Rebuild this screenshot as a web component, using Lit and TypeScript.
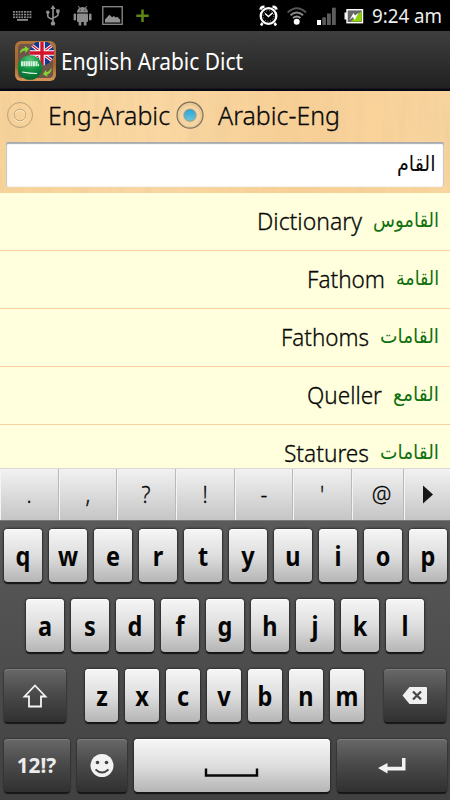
import { LitElement, html, svg, css } from "lit";
import { customElement } from "lit/decorators.js";

// Single-line label squeezed to a fixed width, baseline at `y` of a box `h` high.
const label = (text: string, w: number, h: number, y: number, size: number, cls = "") => html`
  <svg class="label ${cls}" width=${w} height=${h} font-size=${size}>
    <text x="0" y=${y} textLength=${w} lengthAdjust="spacingAndGlyphs">${text}</text>
  </svg>`;

@customElement("status-bar")
class StatusBar extends LitElement {
  static styles = css`
    :host { display: flex; height: 31px; background: #000; box-sizing: border-box; padding-right: 8px; }
    svg { display: block; flex: none; overflow: visible; }
    .time { font-family: "Noto Sans", "Open Sans", sans-serif; fill: #eee; }
    .label { margin-left: auto; }
  `;
  render() {
    return html`
      <svg width="364" height="31">
        <g fill="#8c8c8c">
          ${[0, 1, 2].map((r) => [0, 1, 2, 3, 4, 5, 6].map((c) => svg`<rect x=${13 + c * 2.75} y=${11 + r * 2.7} width="1.9" height="1.7"/>`))}
          <rect x="17" y="19" width="11" height="1.8"/>
        </g>
        <g fill="none" stroke="#929292" stroke-width="1.6">
          <path d="M53 8v15M47.8 13v3q0 2 5 3.3M58 11.5v3q0 2-5 3.3"/>
          <path d="M53 5l2.5 4h-5z" fill="#929292" stroke="none"/>
          <circle cx="53" cy="23.4" r="2.2" fill="#929292" stroke="none"/>
          <circle cx="47.8" cy="12.3" r="1.7" fill="#929292" stroke="none"/>
          <rect x="56.2" y="9.4" width="3.4" height="3.4" fill="#929292" stroke="none"/>
        </g>
        <g fill="#8c8c8c">
          <path d="M77 12.5a5.5 5.5 0 0 1 11 0z"/>
          <path d="M78.4 6l1.6 2.8M86.6 6L85 8.8" stroke="#8c8c8c"/>
          <rect x="77" y="13.6" width="11" height="8.4" rx="1"/>
          <rect x="73.6" y="13.4" width="2.5" height="7" rx="1.2"/><rect x="89" y="13.4" width="2.5" height="7" rx="1.2"/>
          <rect x="78.6" y="20" width="2.7" height="5.6" rx="1.2"/><rect x="83.8" y="20" width="2.7" height="5.6" rx="1.2"/>
          <g fill="#000"><circle cx="80.2" cy="10" r=".6"/><circle cx="84.8" cy="10" r=".6"/></g>
        </g>
        <rect x="102.8" y="6.7" width="19.4" height="17.6" fill="none" stroke="#8c8c8c" stroke-width="1.3"/>
        <path d="M105 22.5v-3l4.3-4.8 2.8 2.6 1.8-1.3 1.8 1.4 1.5-.7 3 3v2.8z" fill="#929292"/>
        <path d="M142.5 9.5v12.4M136.3 15.7h12.4" stroke="#5f8715" stroke-width="2.5"/>

        <g fill="none" stroke="#fff">
          <circle cx="268.5" cy="16" r="7.8" stroke-width="2.3"/>
          <path d="M260.5 9.6q.4-3 4-2.8M276.5 9.6q-.4-3-4-2.8" stroke-width="2.5"/>
          <path d="M262.5 23l-1.5 2.5M274.5 23l1.5 2.5" stroke-width="2.5"/>
          <path d="M265 13.5l3.5 3 4.2-3.7" stroke-width="1.5"/>
          <circle cx="268.5" cy="16" r="5.3" stroke-width=".8" stroke-dasharray=".8 1.97"/>
        </g>
        <g fill="none" stroke-width="1.9">
          <path d="M287.6 12.5q9.3-8.5 18.4 0" stroke="#555"/>
          <path d="M290.5 15.3q6.2-5.6 12.6 0" stroke="#888"/>
          <path d="M293 18q3.8-3 7.5 0" stroke="#999"/>
          <circle cx="296.7" cy="21.7" r="3" fill="#fff" stroke="none"/>
        </g>
        <rect x="317" y="20" width="4" height="5" fill="#fff"/>
        <g fill="#5c5c5c"><rect x="322.3" y="17.3" width="3.6" height="7.7"/><rect x="327" y="13.5" width="3.8" height="11.5"/><rect x="332" y="7.7" width="3.8" height="17.3"/></g>
        <rect x="344.5" y="12.5" width="2.5" height="7" fill="#eee"/>
        <rect x="347" y="9.7" width="15.5" height="13" fill="#666" stroke="#fff" stroke-width="1.4"/>
        <path d="M361.500 11V21.500h-10.500z" fill="#8ed400"/>
        <path d="M349.500 20l4-7 1.500 2.500 4-3-4.500 7.500-1.500-3z" fill="#fff"/>
      </svg>
      <svg class="time label" width="70" height="31" font-size="20">
        <text x="0" y="23" textLength="70" lengthAdjust="spacingAndGlyphs">9:24 am</text>
      </svg>`;
  }
}

@customElement("title-bar")
class TitleBar extends LitElement {
  static styles = css`
    :host { display: flex; height: 60px; box-sizing: border-box; padding-left: 14px; gap: 5px;
      background: linear-gradient(#3e3e3e, #212121 57px, #0a0a14 58px, #05051c); }
    svg { display: block; flex: none; overflow: visible; }
    .label { font-family: "Noto Sans", "Open Sans", sans-serif; fill: #fff; }
  `;
  render() {
    return html`
      <svg width="42" height="60">
        <defs>
          <linearGradient id="frame" x1="0" y1="0" x2="0" y2="1"><stop offset="0" stop-color="#b0763a"/><stop offset=".6" stop-color="#a5642a"/><stop offset="1" stop-color="#d8965a"/></linearGradient>
          <radialGradient id="green" cx=".5" cy=".2" r=".8"><stop offset="0" stop-color="#5cc47c"/><stop offset=".5" stop-color="#139443"/><stop offset="1" stop-color="#04662a"/></radialGradient>
          <clipPath id="ball"><circle cx="28" cy="22" r="12.3"/></clipPath>
          <clipPath id="box"><rect x="2" y="11" width="39" height="38" rx="5"/></clipPath>
        </defs>
        <rect x="1" y="10" width="41" height="40" rx="6" fill="url(#frame)"/>
        <rect x="4" y="13" width="35" height="34" rx="4" fill="#6d5547"/>
        <g clip-path="url(#box)"><g clip-path="url(#ball)">
          <rect x="14" y="8" width="28" height="28" fill="#17398c"/>
          <path d="M15 12l26 20M41 12L15 32" stroke="#fff" stroke-width="3"/>
          <path d="M15 12l26 20M41 12L15 32" stroke="#d3122c" stroke-width="1.2"/>
          <path d="M28 8v28M14 22h28" stroke="#fff" stroke-width="5.6"/>
          <path d="M28 8v28M14 22h28" stroke="#d3122c" stroke-width="3.4"/>
        </g></g>
        <circle cx="16" cy="36.5" r="12.3" fill="url(#green)"/>
        <path d="M7 31.5h17M7 34h18" stroke="#d9f4df" stroke-width="2.4" stroke-dasharray="1.9 .5"/>
        <path d="M8 41q8 1.500 15 1.500" stroke="#e4f4e8" stroke-width="1.1" fill="none"/>
        <path d="M6 22.5q0-5 5-5.5l-.5-2.300 4.500 3-3.500 4.500-.2-2.600q-3 0-5.300 2.900z" fill="#86d432"/>
        <path d="M37.500 36.500q.5 5.500-4.500 7l.7 2.300-4.700-2.500 3-4.600.5 2.600q3-.6 5-4.800z" fill="#86d432"/>
      </svg>
      ${label("English Arabic Dict", 182, 60, 39, 23)}`;
  }
}

@customElement("search-panel")
class SearchPanel extends LitElement {
  static styles = css`
    :host { display: block; position: relative; height: 102px; box-sizing: border-box; overflow: hidden;
      background: linear-gradient(90deg, #f8d39a, #fad7a2 35%, #f8d096 65%, #fad59e); }
    .grain { position: absolute; inset: 0; width: 100%; height: 100%; }
    .content { position: relative; padding: 0 6px; }
    .options { display: flex; height: 51px; }
    svg { display: block; flex: none; overflow: visible; }
    .label { font-family: "Noto Sans", "Open Sans", sans-serif; font-weight: 300; fill: #080808; stroke: #080808; stroke-width: .3px; }
    .first { margin-right: 6px; }
    .dot { margin-right: 14px; }
    .field { display: flex; justify-content: flex-end; height: 45px; box-sizing: border-box; padding-right: 9px; background: #fff;
      border-radius: 2px; box-shadow: inset 0 2px 1px #a9acb0, inset 1px 0 1px #c8c8c8, inset -1px 0 1px #c8c8c8, 0 0 1px #e8d9be; }
    .label.arabic { font-family: "DejaVu Sans", sans-serif; font-weight: 400; stroke: none; }
  `;
  radio(on: boolean) {
    return html`<svg class="dot" width="28" height="51">
      <defs><linearGradient id="blue" x1="0" y1="0" x2="0" y2="1"><stop offset="0" stop-color="#2ba3d8"/><stop offset="1" stop-color="#6cc6dc"/></linearGradient></defs>
      ${on
        ? svg`<circle cx="14" cy="24.2" r="13" fill="#d8bf9180" stroke="#7d705a" stroke-width="1.2"/>
              <circle cx="14" cy="24.8" r="10.5" fill="#f5d5a3"/>
              <circle cx="14" cy="24.2" r="7" fill="#dfc190"/>
              <circle cx="14" cy="24.2" r="5.900" fill="url(#blue)" stroke="#7a9a96" stroke-width=".8"/>`
        : svg`<circle cx="14" cy="24" r="12.5" fill="none" stroke="#bca078" stroke-width="1"/>
              <circle cx="14" cy="25" r="5.8" fill="none" stroke="#ffe7be" stroke-width="1.2"/>
              <circle cx="14" cy="24" r="5.8" fill="none" stroke="#c3a67c" stroke-width="1"/>`}
    </svg>`;
  }
  render() {
    return html`
      <svg class="grain">
        <filter id="wood" x="0" y="0" width="100%" height="100%">
          <feTurbulence type="fractalNoise" baseFrequency="0.09 0.012" numOctaves="3" seed="8"/>
          <feColorMatrix values="0 0 0 0 .78  0 0 0 0 .56  0 0 0 0 .3  .6 0 0 0 -.22"/>
        </filter>
        <rect width="100%" height="100%" filter="url(#wood)"/>
      </svg>
      <div class="content">
        <div class="options">
          ${this.radio(false)}
          ${label("Eng-Arabic", 122, 51, 34, 26, "first")}
          ${this.radio(true)}
          ${label("Arabic-Eng", 122, 51, 34, 26)}
        </div>
        <div class="field">${label("القام", 38.5, 45, 28.5, 21, "arabic")}</div>
      </div>`;
  }
}

const ROWS: [string, number, string, number][] = [
  ["Dictionary", 105, "القاموس", 66],
  ["Fathom", 78, "القامة", 43],
  ["Fathoms", 88, "القامات", 59],
  ["Queller", 75, "القامع", 46],
  ["Statures", 85, "القامات", 59],
];

@customElement("word-list")
class WordList extends LitElement {
  static styles = css`
    :host { display: block; height: 275px; overflow: hidden; background: #ffffdd; }
    .row { display: flex; justify-content: flex-end; gap: 10.5px; height: 58px; box-sizing: border-box; padding-right: 11.5px;
      border-bottom: 1.5px solid #fad09c; }
    svg { display: block; flex: none; overflow: visible; }
    .label { font-family: "Noto Sans", "Open Sans", sans-serif; font-weight: 300; fill: #080808; stroke: #080808; stroke-width: .3px; }
    .label.arabic { font-family: "DejaVu Sans", sans-serif; font-weight: 400; fill: #10700f; stroke: none; }
  `;
  render() {
    return ROWS.map(([en, we, ar, wa]) => html`
      <div class="row">${label(en, we, 57, 37, 24)}${label(ar, wa, 57, 33.5, 20, "arabic")}</div>`);
  }
}

@customElement("soft-keyboard")
class SoftKeyboard extends LitElement {
  static styles = css`
    :host { display: block; font-family: "Noto Sans", "Open Sans", sans-serif; }
    svg { display: block; flex: none; overflow: visible; }
    .strip { display: grid; grid-template-columns: repeat(6, 58.7px) 52px 1fr; height: 52px; box-sizing: border-box;
      border-top: 1px solid #d8d8d8; background: linear-gradient(#f2f2f2, #c5c5c5); }
    .cell { border-left: 1px solid #f4f4f4; border-right: 1px solid #b9b9b9; box-sizing: border-box; }
    .cell:last-child { border-right: 0; }
    .cell text { font-size: 24px; font-weight: 300; fill: #050505; stroke: #050505; stroke-width: .3px; }
    .keys { height: 280px; box-sizing: border-box; padding: 9px 3.5px 0; display: flex; flex-direction: column; gap: 17px;
      background: linear-gradient(#5a5a5a, #414141); box-shadow: inset 0 1px #777; }
    .row { display: flex; gap: 7px; height: 53px; }
    .middle { padding: 0 22.5px; }
    .key { flex: 1 1 0; min-width: 0; height: 53px; border-radius: 4px; background: linear-gradient(#f6f6f6, #dedede 50%, #b5b5b5);
      box-shadow: 0 2px 1px #151515, 0 0 2px 1px #303030, inset 0 1px #fff; }
    .dark { background: linear-gradient(#686868, #4b4b4b 45%, #303030);
      box-shadow: 0 2px 1px #171717, 0 0 2px #1c1c1c, inset 0 1px #7c7c7c; }
    .key text { font-size: 27px; font-weight: 700; fill: #050505; text-anchor: middle; }
    .letters { display: flex; flex: none; gap: 7px; width: 279px; margin: 0 20.5px 0 19px; }
    .third { gap: 0; }
    .w62 { flex: 0 0 62px; } .w67 { flex: 0 0 66.5px; } .w51 { flex: 0 0 50px; } .w196 { flex: 0 0 196px; }
    .key .modes { font-size: 21px; fill: #ececec; }
  `;
  letters(s: string, w: number) {
    return [...s].map((c) => html`<div class="key"><svg width=${w} height="53">
      <text transform="translate(${w / 2} 36.5) scale(.87 1)">${c}</text></svg></div>`);
  }
  render() {
    const marks: [string, number][] = [[".", 28], [",", 28], ["?", 28], ["!", 28], ["-", 28], ["'", 28], ["@", 28.5]];
    return html`
      <div class="strip">
        ${marks.map(([m, x]) => html`<div class="cell"><svg width="50" height="51">
          <text transform="translate(${x} 33.5) scale(${m === "@" ? 0.92 : 0.88} 1)" text-anchor="middle">${m}</text></svg></div>`)}
        <div class="cell"><svg width="40" height="51"><path d="M18 16.500l10 9-10 9z" fill="#151515"/></svg></div>
      </div>
      <div class="keys">
        <div class="row">${this.letters("qwertyuiop", 38)}</div>
        <div class="row middle">${this.letters("asdfghjkl", 38)}</div>
        <div class="row third">
          <div class="key dark w62"><svg width="62" height="53">
            <path d="M31 16.500L41.500 27.500H37V37.500H25V27.500H20.500z" fill="none" stroke="#f4f4f4" stroke-width="1.8"/></svg></div>
          <div class="letters">${this.letters("zxcvbnm", 33.9)}</div>
          <div class="key dark w62"><svg width="62" height="53">
            <path d="M18.500 26.500L25.500 18H42q1 0 1 1V34q0 1-1 1H25.500z" fill="#f0f0f0"/>
            <path d="M29 22.500l8 8M37 22.500l-8 8" stroke="#484848" stroke-width="2.3"/></svg></div>
        </div>
        <div class="row">
          <div class="key dark w67"><svg width="67" height="53">
            <text class="modes" x="32.500" y="34" textLength="39.5" lengthAdjust="spacingAndGlyphs">12!?</text></svg></div>
          <div class="key dark w51"><svg width="50" height="53">
            <circle cx="25" cy="26.5" r="11.5" fill="#f2f2f2"/>
            <circle cx="20.5" cy="23.5" r="1.8" fill="#444"/><circle cx="29.5" cy="23.5" r="1.8" fill="#444"/>
            <path d="M18.500 30.500q6.500 6 13 0" fill="none" stroke="#444" stroke-width="1.8"/></svg></div>
          <div class="key w196"><svg width="196" height="53">
            <path d="M72 29.500v7h51v-7" fill="none" stroke="#080808" stroke-width="2.4"/></svg></div>
          <div class="key dark"><svg width="108" height="53">
            <path d="M41 29l9.500-5v3.700H65V19h3.500v12.500h-18v3z" fill="#f2f2f2"/></svg></div>
        </div>
      </div>`;
  }
}

@customElement("app-root")
class AppRoot extends LitElement {
  static styles = css`
    :host { display: flex; flex-direction: column; width: 450px; height: 800px; overflow: hidden; background: #000; }
  `;
  render() {
    return html`
      <status-bar></status-bar>
      <title-bar></title-bar>
      <search-panel></search-panel>
      <word-list></word-list>
      <soft-keyboard></soft-keyboard>`;
  }
}
